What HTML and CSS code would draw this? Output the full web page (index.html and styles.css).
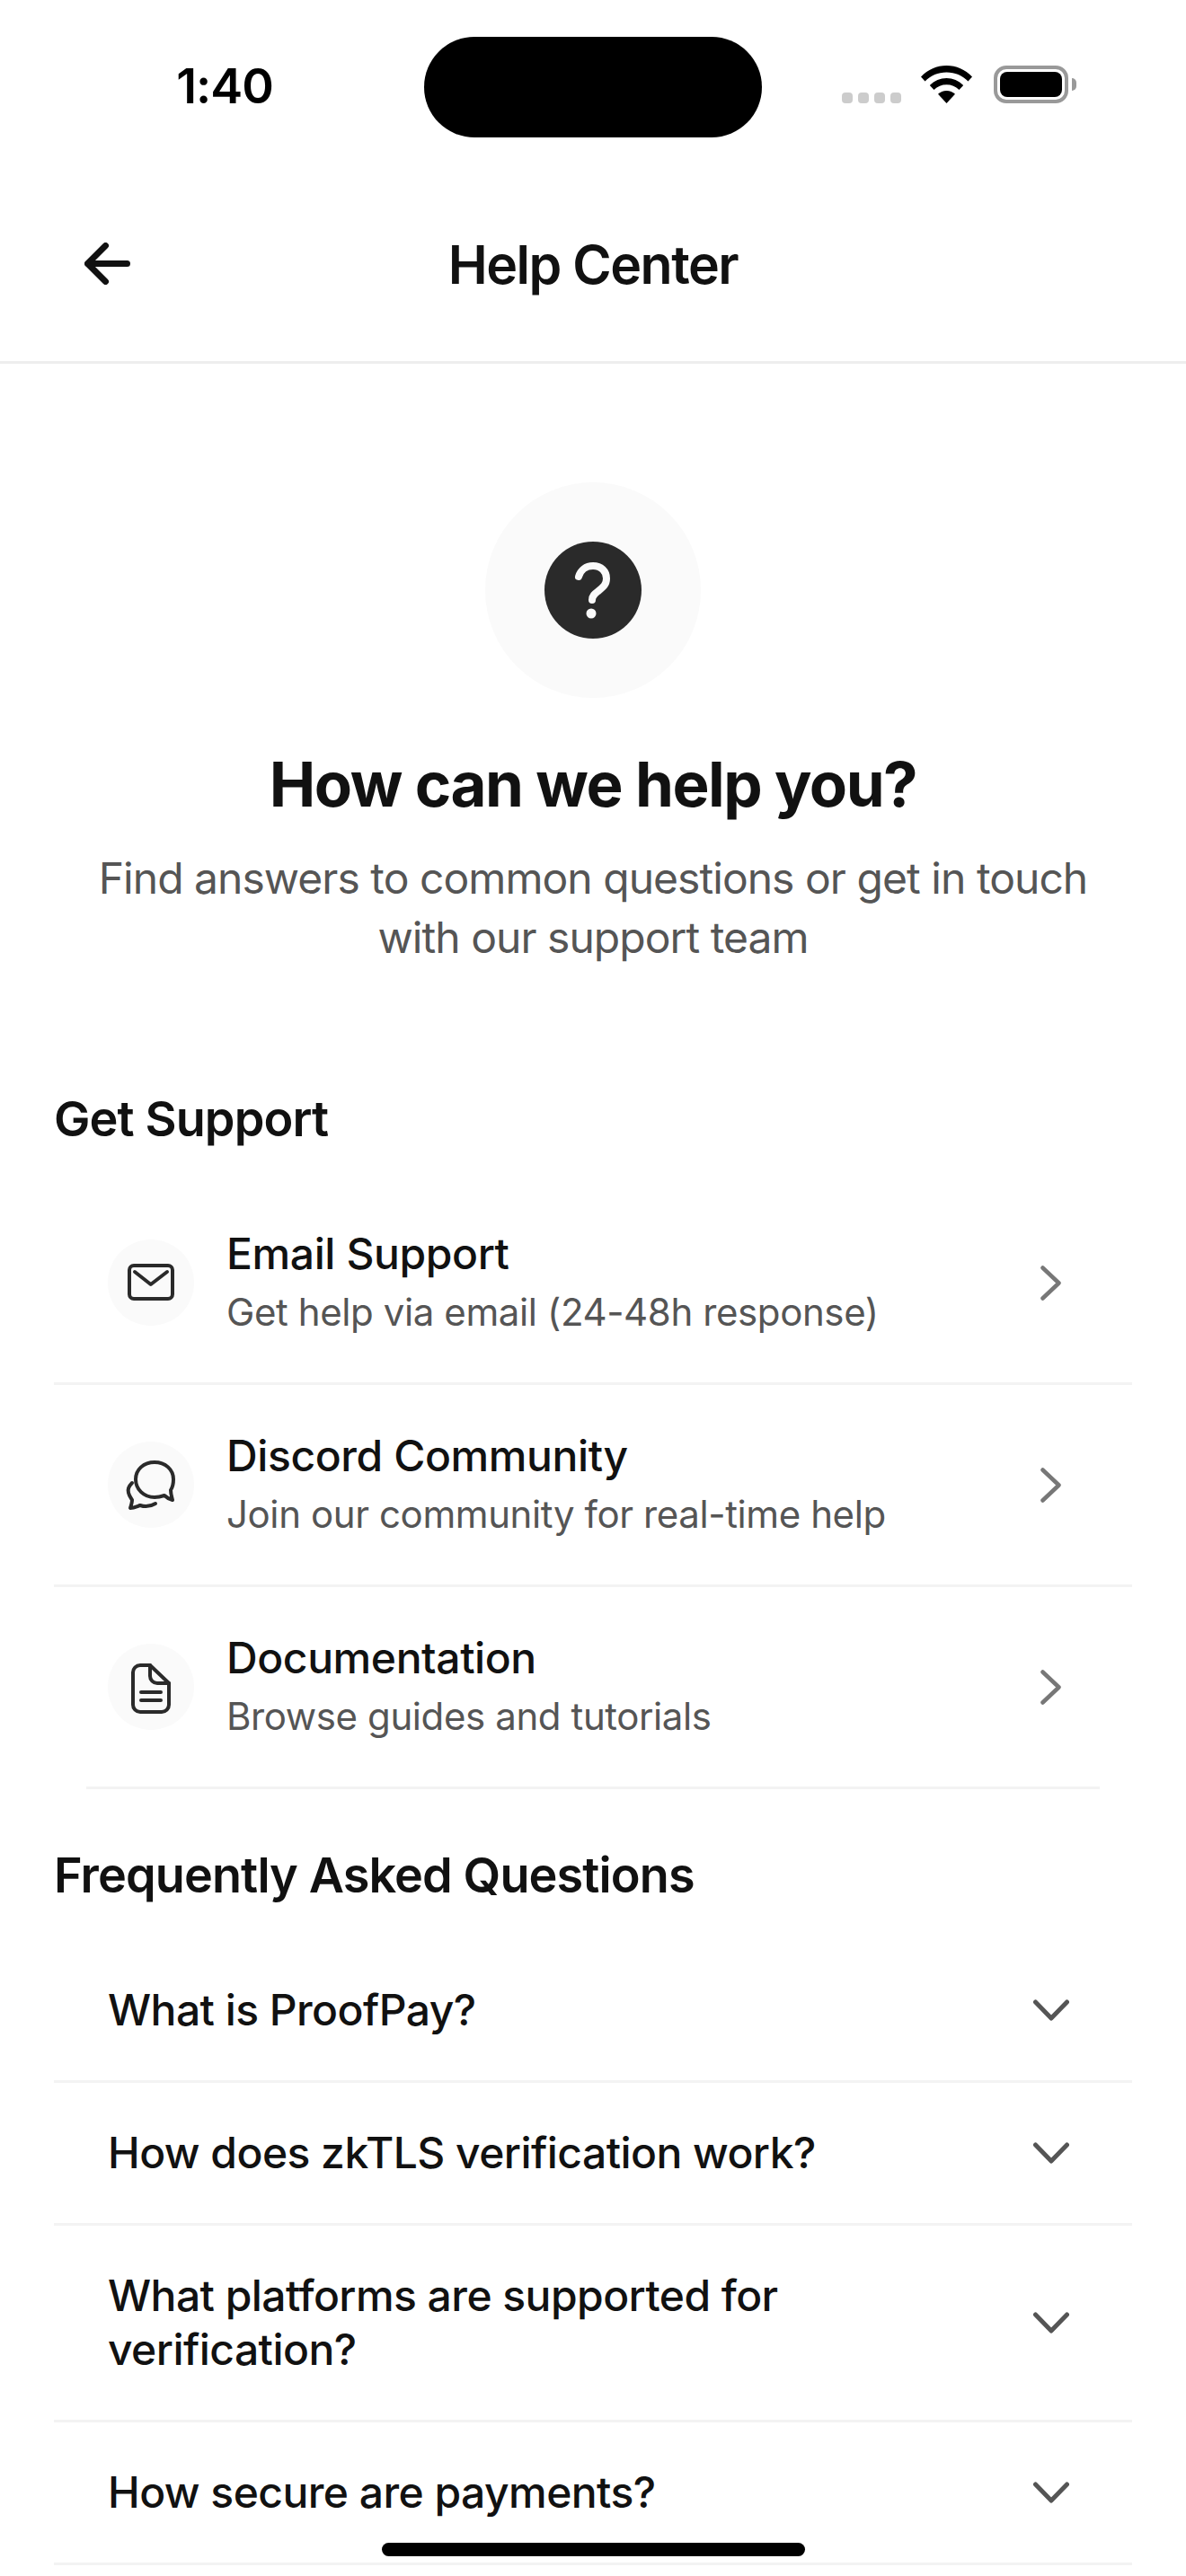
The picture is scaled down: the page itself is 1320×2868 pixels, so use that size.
FILE: index.html
```html
<!DOCTYPE html>
<html lang="en">
<head>
<meta charset="utf-8">
<title>Help Center</title>
<link rel="stylesheet" href="styles.css">
</head>
<body>
<div class="screen">
  <div class="status">
    <div class="time">1:40</div>
    <div class="island"></div>
    <div class="sys">
      <div class="dots"><i></i><i></i><i></i><i></i></div>
      <svg class="wifi" viewBox="0 0 57 42"><path d="M28.5 0C17.5 0 8 4.3 0 12.5L4.5 17.5C11 11 19 7.5 28.5 7.5S46 11 52.5 17.5L57 12.5C49 4.3 39.500 0 28.500 0Z"/><path d="M28.5 14C21.500 14 15 16.800 9.800 22L14.500 27C18.500 23.300 23 21.300 28.500 21.300S38.500 23.300 42.500 27L47.200 22C42 16.800 35.500 14 28.500 14Z"/><path d="M28.500 28C24.800 28 21.500 29.400 19 31.800L28.500 42L38 31.800C35.500 29.400 32.200 28 28.500 28Z"/></svg>
      <div class="battery"><div class="cell"></div></div>
      <div class="cap"></div>
    </div>
  </div>
  <header class="nav">
    <svg class="back" viewBox="0 0 51 47"><path d="M23.500 3.500L3.500 23.500L23.500 43.500M3.500 23.500H47.500"/></svg>
    <h1 class="nav-title">Help Center</h1>
  </header>
  <main>
    <section class="hero">
      <div class="halo">
        <svg class="q" viewBox="0 0 108 108"><circle cx="54" cy="54" r="54" fill="#2a2a2a"/><path d="M38 39C40 32 46 27 54 27C63 27 69 33 69 41C69 48 65 51 60 55C56 58 53 60 53 65" fill="none" stroke="#fafafa" stroke-width="8" stroke-linecap="round"/><circle cx="52" cy="80" r="5.500" fill="#fafafa"/></svg>
      </div>
      <h2 class="hero-title">How can we help you?</h2>
      <p class="hero-sub">Find answers to common questions or get in touch with our support team</p>
    </section>

    <h3 class="sec sec-support">Get Support</h3>
    <div class="list">
      <div class="item">
        <div class="ico"><svg viewBox="0 0 96 96"><rect x="24" y="29" width="48" height="37" rx="5"/><path d="M30 36L47.800 50L66 36"/></svg></div>
        <div class="txt"><div class="ttl">Email Support</div><div class="desc">Get help via email (24-48h response)</div></div>
        <svg class="chev" viewBox="0 0 23 39"><path d="M2.500 2.500L20.500 19.500L2.500 36.500"/></svg>
      </div>
      <div class="item">
        <div class="ico"><svg viewBox="0 0 96 96"><path d="M52 23C40 23 31 31 31 42C31 53 40 62 52 62C56 62 60 61 63 60C66 63 69 64 72 65C71 61 70 58 70 54C72 51 73 46 73 42C73 31 64 23 52 23Z"/><path d="M27 46C23 50 22 54 23 57C24 61 26 63 27 65C27 68 26 71 25 74C29 74 33 72 36 71C42 73 48 72 53 69"/></svg></div>
        <div class="txt"><div class="ttl">Discord Community</div><div class="desc">Join our community for real-time help</div></div>
        <svg class="chev" viewBox="0 0 23 39"><path d="M2.500 2.500L20.500 19.500L2.500 36.500"/></svg>
      </div>
      <div class="item last">
        <div class="ico"><svg viewBox="0 0 96 96"><path d="M36 24H47L68 44V68A8 8 0 0 1 60 76H36A8 8 0 0 1 28 68V32A8 8 0 0 1 36 24Z"/><path d="M47 24V36A8 8 0 0 0 55 44H68"/><path d="M37 54H59M37 63H59"/></svg></div>
        <div class="txt"><div class="ttl">Documentation</div><div class="desc">Browse guides and tutorials</div></div>
        <svg class="chev" viewBox="0 0 23 39"><path d="M2.500 2.500L20.500 19.500L2.500 36.500"/></svg>
      </div>
    </div>

    <h3 class="sec sec-faq">Frequently Asked Questions</h3>
    <div class="faq">
      <div class="q-row"><span>What is ProofPay?</span><svg class="down" viewBox="0 0 40 24"><path d="M2.500 3L20 21L37.500 3"/></svg></div>
      <div class="q-row"><span>How does zkTLS verification work?</span><svg class="down" viewBox="0 0 40 24"><path d="M2.500 3L20 21L37.500 3"/></svg></div>
      <div class="q-row"><span>What platforms are supported for verification?</span><svg class="down" viewBox="0 0 40 24"><path d="M2.500 3L20 21L37.500 3"/></svg></div>
      <div class="q-row"><span>How secure are payments?</span><svg class="down" viewBox="0 0 40 24"><path d="M2.500 3L20 21L37.500 3"/></svg></div>
    </div>
  </main>
  <div class="home"></div>
</div>
</body>
</html>
```
FILE: styles.css
```css
* { box-sizing: border-box; }
html, body { margin: 0; padding: 0; background: #fff; }
.screen { position: relative; width: 1320px; height: 2868px; overflow: hidden; font-family: Inter, "Liberation Sans", sans-serif; color: #111; }

.status { display: grid; grid-template-columns: 472px 376px 1fr; height: 180px; padding-top: 41px; }
.time { font-size: 54px; font-weight: 600; letter-spacing: -1px; color: #000; text-align: center; padding: 22px 0 0 28px; line-height: 66px; }
.island { width: 376px; height: 112px; border-radius: 56px; background: #000; }
.sys { display: flex; align-items: flex-end; height: 74px; padding-left: 89px; }
.dots { display: flex; gap: 6px; margin-right: 22px; }
.dots i { display: block; width: 12px; height: 12px; border-radius: 4px; background: #ccc; }
.wifi { display: block; width: 57px; height: 42px; fill: #000; margin-right: 24px; }
.battery { width: 83px; height: 42px; border: 4px solid #999; border-radius: 14px; padding: 3px; }
.cell { width: 100%; height: 100%; background: #000; border-radius: 8px; }
.cap { width: 5px; height: 14px; margin: 0 0 14px 4px; background: #999; border-radius: 0 7px 7px 0; }

.nav { position: relative; height: 225px; border-bottom: 3px solid #eee; display: flex; align-items: center; justify-content: center; padding-top: 8px; }
.back { position: absolute; left: 94px; top: 90px; width: 51px; height: 47px; fill: none; stroke: #111; stroke-width: 7px; stroke-linecap: round; stroke-linejoin: round; }
.nav-title { margin: 0; font-size: 59px; font-weight: 600; letter-spacing: -1.500px; line-height: 70px; color: #111; }

main { padding: 132px 60px 0; }
.hero { display: flex; flex-direction: column; align-items: center; }
.halo { width: 240px; height: 240px; border-radius: 50%; background: #fafafa; display: flex; align-items: center; justify-content: center; padding-bottom: 1px; }
.q { display: block; width: 108px; height: 108px; }
.hero-title { margin: 54px 0 0; font-size: 69px; font-weight: 700; letter-spacing: -1.500px; line-height: 84px; color: #111; }
.hero-sub { margin: 30px 0 0; width: 1130px; font-size: 48px; letter-spacing: -0.960px; line-height: 66px; color: #555; text-align: center; }

.sec { margin: 0; font-size: 54px; font-weight: 600; letter-spacing: -0.900px; line-height: 66px; color: #111; }
.sec-support { margin-top: 136px; }
.sec-faq { margin-top: 63px; }

.list { margin-top: 38px; }
.item { display: flex; align-items: center; height: 225px; padding: 0 60px; border-bottom: 3px solid #f3f3f3; }
.item.last { margin: 0 36px; padding: 0 24px; }
.ico { width: 96px; height: 96px; border-radius: 50%; background: #fafafa; flex: none; }
.ico svg { display: block; width: 96px; height: 96px; fill: none; stroke: #2a2a2a; stroke-width: 4px; stroke-linecap: round; stroke-linejoin: round; }
.txt { flex: 1; margin-left: 36px; padding-bottom: 2px; }
.ttl { font-size: 48px; font-weight: 500; letter-spacing: -0.400px; line-height: 60px; color: #111; }
.desc { margin-top: 8px; font-size: 42px; letter-spacing: -0.400px; line-height: 54px; color: #555; }
.chev { flex: none; width: 23px; height: 39px; margin-right: 19px; fill: none; stroke: #777; stroke-width: 4.500px; stroke-linecap: round; stroke-linejoin: round; }

.faq { margin-top: 39px; }
.q-row { display: flex; align-items: center; justify-content: space-between; padding: 48px 70px 48px 60px; border-bottom: 3px solid #f3f3f3; }
.q-row span { display: block; width: 900px; font-size: 48px; font-weight: 500; letter-spacing: -0.550px; line-height: 60px; color: #111; }
.down { flex: none; width: 40px; height: 24px; fill: none; stroke: #555; stroke-width: 5px; stroke-linecap: round; stroke-linejoin: round; }

.home { position: absolute; left: 425px; top: 2831px; width: 471px; height: 15px; border-radius: 8px; background: #000; }
```
